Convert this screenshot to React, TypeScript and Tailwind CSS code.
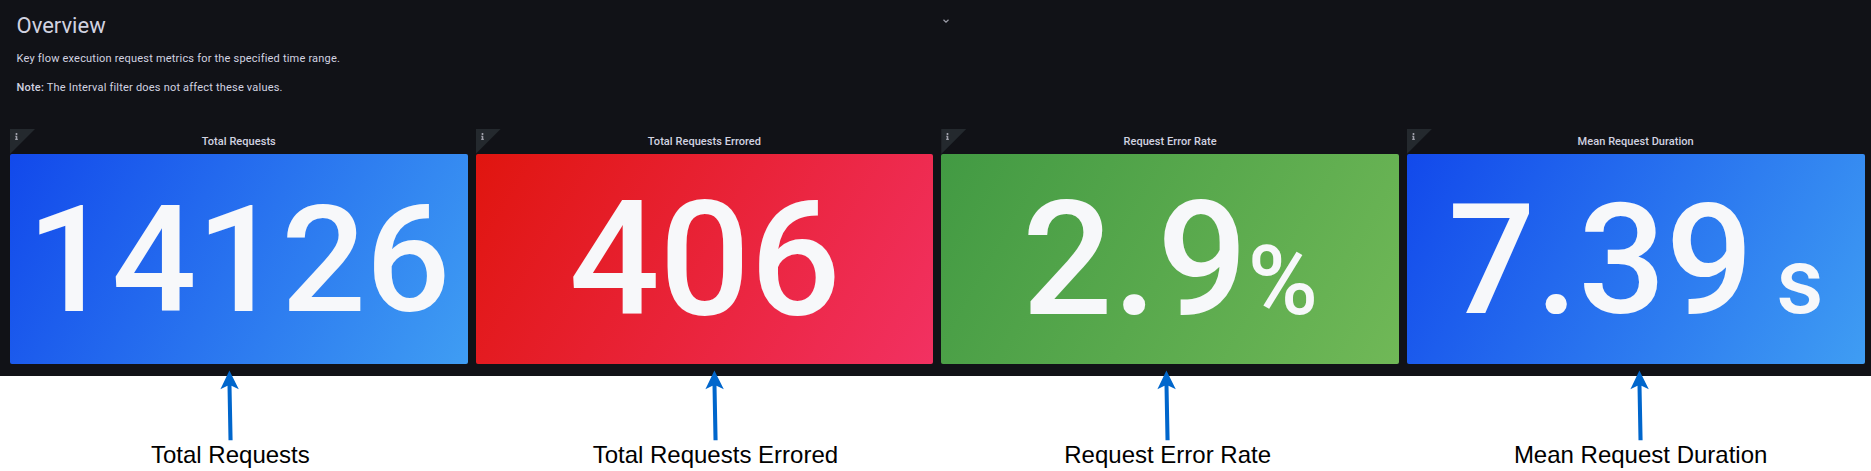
import { FaInfo } from "react-icons/fa";

type Stat = {
  title: string;
  value: string;
  unit?: string;
  gradient: string;
  valueClass: string;
  unitClass?: string;
  arrowClass: string;
  labelClass: string;
};

const stats: Stat[] = [
  {
    title: "Total Requests",
    value: "14126",
    gradient: "bg-[linear-gradient(120deg,#1249eb,#3f9df3)]",
    valueClass: "text-[149px] pt-0.5",
    arrowClass: "ml-[210px]",
    labelClass: "pl-[141px]",
  },
  {
    title: "Total Requests Errored",
    value: "406",
    gradient: "bg-[linear-gradient(120deg,#e0150f,#f23162)]",
    valueClass: "text-[159.5px] pt-0.5 pl-px",
    arrowClass: "ml-[229px]",
    labelClass: "pl-[117px]",
  },
  {
    title: "Request Error Rate",
    value: "2.9",
    unit: "%",
    gradient: "bg-[linear-gradient(120deg,#429a43,#70b857)]",
    valueClass: "text-[159.5px] pt-0.5",
    unitClass: "text-[95.5px]",
    arrowClass: "ml-[216px]",
    labelClass: "pl-[123px]",
  },
  {
    title: "Mean Request Duration",
    value: "7.39",
    unit: " s",
    gradient: "bg-[linear-gradient(120deg,#1249eb,#3f9df3)]",
    valueClass: "text-[154px] pt-1",
    unitClass: "text-[92px]",
    arrowClass: "ml-[223px]",
    labelClass: "pl-[107px]",
  },
];

function StatPanel({ stat }: { stat: Stat }) {
  return (
    <section className="relative">
      <div className="absolute left-0 top-0 size-[25px] bg-[#24292e] [clip-path:polygon(0_0,100%_0,0_100%)]">
        <FaInfo className="ml-[3px] mt-1 size-[7px] text-[#a0a1ab]" />
      </div>
      <h2 className="h-[25px] text-center text-[11px] font-medium leading-[25px] tracking-[0.05px] text-[#d2d2e0]">
        {stat.title}
      </h2>
      <div
        className={`flex h-[210px] items-center justify-center overflow-hidden whitespace-pre rounded-[2px] font-medium leading-none text-[#f7f8fa] ${stat.gradient}`}
      >
        <div className={stat.valueClass}>
          {stat.value}
          {stat.unit && <span className={stat.unitClass}>{stat.unit}</span>}
        </div>
      </div>
    </section>
  );
}

function Callout({ stat }: { stat: Stat }) {
  return (
    <div>
      <svg className={`block h-[72px] w-5 ${stat.arrowClass}`} viewBox="0 0 20 72" fill="#0066cc">
        <path d="M9.4 1.5 18.8 20.2 11.5 16.8 12.6 71.3H8.5L7.5 16.8.4 20.2Z" />
      </svg>
      <p
        className={`-mt-0.5 whitespace-nowrap font-['Liberation_Sans',sans-serif] text-2xl leading-8 text-black ${stat.labelClass}`}
      >
        {stat.title}
      </p>
    </div>
  );
}

export default function App() {
  return (
    <div className="h-[471px] w-[1871px] overflow-hidden bg-white font-['Roboto',sans-serif]">
      <main className="h-[376px] bg-[#111217] text-[#d2d2e0]">
        <header className="flex h-[129px] pl-[16.5px] pt-3">
          <div className="w-[926px]">
            <h1 className="text-[22px] leading-7">Overview</h1>
            <p className="mt-[10px] text-[11px] leading-[18px] tracking-[0.2px]">
              Key flow execution request metrics for the specified time range.
            </p>
            <p className="mt-[11px] text-[11px] leading-[18px] tracking-[0.2px]">
              <strong className="font-medium">Note:</strong> The Interval filter does not affect these values.
            </p>
          </div>
          <svg className="mt-[7px] h-[4px] w-[6px]" viewBox="0 0 6 4" fill="none" stroke="#9a9ba6" strokeWidth="1.2">
            <path d="M.5.8 3 3.2 5.5.8" />
          </svg>
        </header>
        <div className="grid grid-cols-4 gap-x-2 pl-[10px] pr-[6.5px]">
          {stats.map((stat) => (
            <StatPanel key={stat.title} stat={stat} />
          ))}
        </div>
      </main>
      <div className="relative -mt-[7px] grid grid-cols-4 gap-x-2 pl-[10px] pr-[6.5px]">
        {stats.map((stat) => (
          <Callout key={stat.title} stat={stat} />
        ))}
      </div>
    </div>
  );
}
